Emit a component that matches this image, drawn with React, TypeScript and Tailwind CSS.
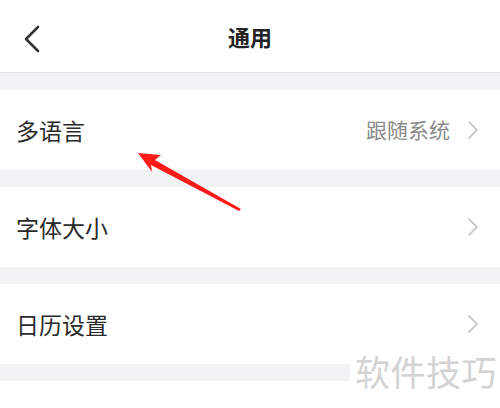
const font = { fontFamily: '"Noto Sans CJK SC", "Noto Sans", sans-serif' };

function Chevron() {
  return (
    <svg width="14" height="22" viewBox="0 0 14 22" fill="none">
      <path d="M3 3l8 8-8 8" stroke="#bdbdbd" strokeWidth="1.6" strokeLinecap="round" strokeLinejoin="round" />
    </svg>
  );
}

function Row({ label, value }: { label: string; value?: string }) {
  return (
    <div className="flex h-[80px] items-center justify-between bg-white pl-4 pr-5">
      <span className="text-[23px] text-[#2b2b2b]">{label}</span>
      <div className="flex items-center gap-4">
        {value && <span className="text-[21px] text-[#8a8a8a]">{value}</span>}
        <Chevron />
      </div>
    </div>
  );
}

const Band = () => <div className="h-[17px] bg-[#f1f2f4]" />;

export default function App() {
  return (
    <div className="relative h-[408px] w-[500px] overflow-hidden bg-white" style={font}>
      {/* header */}
      <div className="relative flex h-[73px] items-center justify-center border-b border-[#e3e3e3] bg-white">
        <svg className="absolute left-[21px] top-[24px]" width="22" height="30" viewBox="0 0 22 30" fill="none">
          <path d="M17 3L5 15l12 12" stroke="#333" strokeWidth="2.6" strokeLinecap="round" strokeLinejoin="round" />
        </svg>
        <span className="text-[22px] font-bold text-[#222]">通用</span>
      </div>

      <Band />
      <Row label="多语言" value="跟随系统" />
      <Band />
      <Row label="字体大小" />
      <Band />
      <Row label="日历设置" />
      <Band />

      {/* annotation arrow */}
      <svg className="absolute left-0 top-0" width="500" height="408" viewBox="0 0 500 408">
        <polygon points="138,153 161,155 155,160 241,209 239,211 151,165 152,172" fill="#ff1a1a" />
      </svg>

      {/* watermark */}
      <div className="absolute left-[350px] top-[348px] flex h-[44px] w-[150px] items-center justify-end bg-white pr-[3px]">
        <span className="text-[35px] leading-none tracking-[0.5px] text-[#d3d3d3]">软件技巧</span>
      </div>
    </div>
  );
}
